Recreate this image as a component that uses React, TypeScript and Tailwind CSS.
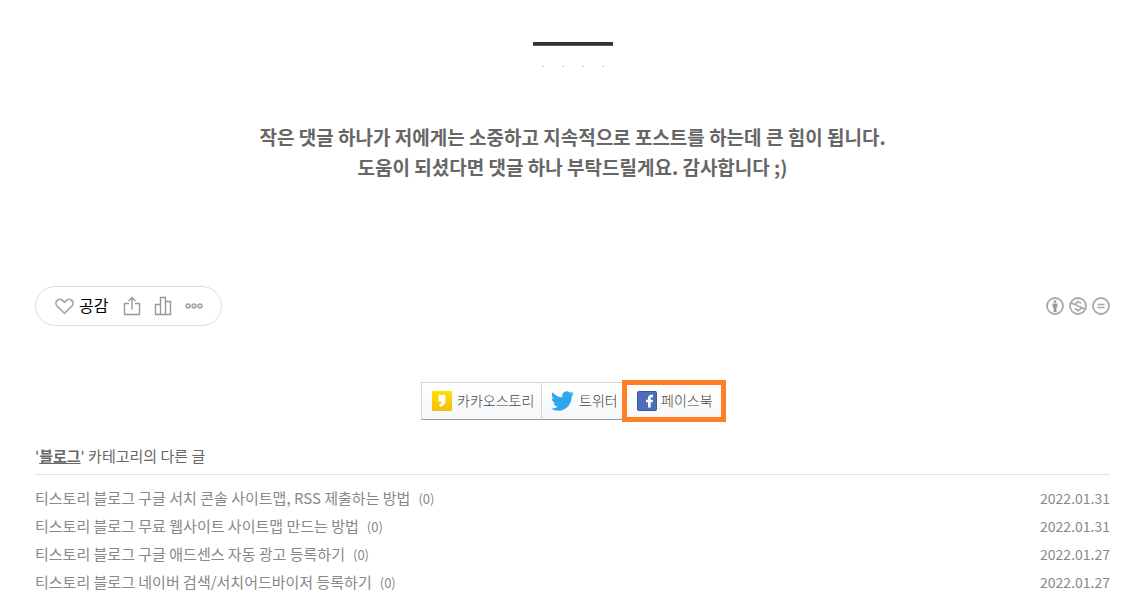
import React from "react";

type Post = { title: string; count: number; date: string };

const posts: Post[] = [
  { title: "티스토리 블로그 구글 서치 콘솔 사이트맵, RSS 제출하는 방법", count: 0, date: "2022.01.31" },
  { title: "티스토리 블로그 무료 웹사이트 사이트맵 만드는 방법", count: 0, date: "2022.01.31" },
  { title: "티스토리 블로그 구글 애드센스 자동 광고 등록하기", count: 0, date: "2022.01.27" },
  { title: "티스토리 블로그 네이버 검색/서치어드바이저 등록하기", count: 0, date: "2022.01.27" },
];

function HeartIcon() {
  return (
    <svg width="19" height="17" viewBox="0 0 19 17" fill="none" stroke="#acacac" strokeWidth="1.8" strokeLinejoin="round" aria-hidden="true">
      <path d="M9.5 15.4 2.2 8.2C.6 6.5.6 4 2.1 2.5c1.6-1.6 4.1-1.6 5.6 0l1.8 1.8 1.8-1.8c1.5-1.6 4-1.6 5.6 0 1.5 1.5 1.5 4-.1 5.7Z" />
    </svg>
  );
}

function ShareIcon() {
  return (
    <svg width="18" height="20" viewBox="0 0 18 20" fill="none" stroke="#999" strokeWidth="1.4" aria-hidden="true">
      <path d="M6 7.5H1.5v11h15v-11H12M9 13.5V1.5M5.5 5 9 1.5 12.5 5" />
    </svg>
  );
}

function StatsIcon() {
  return (
    <svg width="18" height="20" viewBox="0 0 18 20" fill="none" stroke="#999" strokeWidth="1.4" aria-hidden="true">
      <path d="M6.5 18.5h-5v-10h5M6.5 18.5v-17h5v17ZM11.5 5.5h5v13h-5" />
    </svg>
  );
}

function MoreIcon() {
  return (
    <svg width="18" height="6" viewBox="0 0 18 6" fill="none" stroke="#a6a6a6" strokeWidth="1.7" aria-hidden="true">
      <circle cx="3" cy="3" r="1.9" />
      <circle cx="9" cy="3" r="1.9" />
      <circle cx="15" cy="3" r="1.9" />
    </svg>
  );
}

function AttributionIcon() {
  return (
    <svg width="18" height="18" viewBox="0 0 18 18" aria-hidden="true">
      <circle cx="9" cy="9" r="8" fill="none" stroke="#a9a9a9" strokeWidth="1.8" />
      <circle cx="9" cy="4.6" r="1.4" fill="#999" />
      <path d="M6.6 6.5h4.8v4h-1V15H7.6v-4.500h-1Z" fill="#999" />
    </svg>
  );
}

function NonCommercialIcon() {
  return (
    <svg width="18" height="18" viewBox="0 0 18 18" fill="none" stroke="#a9a9a9" aria-hidden="true">
      <circle cx="9" cy="9" r="8" strokeWidth="1.8" />
      <path d="M1.700 5.700 6.600 7.900M11.400 10.100l4.900 2.200" strokeWidth="1.700" />
      <path d="M12 6.600C11.400 5.600 10.300 5.200 9.200 5.200c-1.500 0-2.600.7-2.600 1.800 0 2.400 5.300 1.600 5.300 4.100 0 1.200-1.200 1.900-2.700 1.900-1.500 0-2.600-.5-3.200-1.500M9.200 3.400v2M9.200 12.800v2" strokeWidth="1.600" />
    </svg>
  );
}

function NoDerivativesIcon() {
  return (
    <svg width="18" height="18" viewBox="0 0 18 18" fill="none" stroke="#a9a9a9" aria-hidden="true">
      <circle cx="9" cy="9" r="8" strokeWidth="1.8" />
      <path d="M5.500 7.500h7M5.500 10.500h7" strokeWidth="1.600" />
    </svg>
  );
}

function KakaoStoryIcon() {
  return (
    <svg width="20" height="20" viewBox="0 0 20 20" aria-hidden="true">
      <defs>
        <linearGradient id="story" x1="0" y1="0" x2="0" y2="1">
          <stop offset="0" stopColor="#fde000" />
          <stop offset="1" stopColor="#f3bd0d" />
        </linearGradient>
      </defs>
      <rect width="20" height="20" rx="1.500" fill="url(#story)" />
      <path d="M6.500 4h7v5.500c0 3.500-1.900 5.800-5.300 6.300l-1.300-2c1.700-.6 2.600-1.700 2.700-3.300H6.500Z" fill="#fff" />
    </svg>
  );
}

function TwitterIcon() {
  return (
    <svg width="23" height="20" viewBox="0 2 24 20" preserveAspectRatio="none" fill="#2ca7ee" aria-hidden="true">
      <path d="M23.950 4.570a10 10 0 0 1-2.820.770 4.960 4.960 0 0 0 2.160-2.720 9.900 9.900 0 0 1-3.130 1.180 4.920 4.920 0 0 0-8.380 4.480A13.930 13.930 0 0 1 1.640 3.160a4.920 4.920 0 0 0 1.520 6.570 4.900 4.900 0 0 1-2.230-.620v.060a4.920 4.920 0 0 0 3.950 4.830 5 5 0 0 1-2.210.080 4.940 4.940 0 0 0 4.600 3.420A9.870 9.870 0 0 1 0 19.540a13.990 13.990 0 0 0 7.550 2.210c9.050 0 14-7.500 14-13.980 0-.210 0-.420-.020-.630a9.940 9.940 0 0 0 2.460-2.550Z" />
    </svg>
  );
}

function FacebookIcon() {
  return (
    <svg width="20" height="20" viewBox="0 0 20 20" aria-hidden="true">
      <rect x=".5" y=".5" width="19" height="19" rx="1" fill="#4c6db8" stroke="#3a589c" />
      <path d="M11 16.500v-5.200H9V8.800h2V7.400c0-2.300 1.300-3.600 3.400-3.600.8 0 1.200.1 1.600.2v2.200h-1c-1 0-1.300.5-1.300 1.300v1.300h2.300l-.4 2.500h-1.900v5.200Z" fill="#fff" />
    </svg>
  );
}

export default function App() {
  return (
    <main className="bg-white pt-[42px] pr-8 pl-[35px] font-['Noto_Sans_CJK_KR','Noto_Sans_KR',sans-serif] text-[#666]">
      <div className="flex flex-col items-center">
        <div className="h-1 w-20 border-b border-[#605a5c] bg-[#333]" />
        <div className="mt-5 flex gap-[18px]" aria-hidden="true">
          <span className="h-px w-0.5 bg-[#cfcfcf]" />
          <span className="h-px w-0.5 bg-[#cfcfcf]" />
          <span className="h-px w-0.5 bg-[#cfcfcf]" />
          <span className="h-px w-0.5 bg-[#cfcfcf]" />
        </div>
      </div>

      <p className="mt-[55px] text-center text-[19px] leading-[30px] font-bold text-[#666]">
        작은 댓글 하나가 저에게는 소중하고 지속적으로 포스트를 하는데 큰 힘이 됩니다.
        <br />
        도움이 되셨다면 댓글 하나 부탁드릴게요. 감사합니다 ;)
      </p>

      <div className="mt-[104px] flex items-center justify-between">
        <div className="flex h-10 items-center rounded-full border border-[#dcdcdc] pr-[18px] pl-[19px]">
          <button type="button" className="flex items-center gap-[5px] text-base leading-6 text-black">
            <HeartIcon />
            <span className="pb-0.5">공감</span>
          </button>
          <button type="button" aria-label="공유하기" className="ml-[15px]">
            <ShareIcon />
          </button>
          <button type="button" aria-label="통계" className="ml-[13px]">
            <StatsIcon />
          </button>
          <button type="button" aria-label="더보기" className="ml-[13px]">
            <MoreIcon />
          </button>
        </div>
        <a href="#license" aria-label="저작자표시 비영리 변경금지" className="flex gap-[5px]">
          <AttributionIcon />
          <NonCommercialIcon />
          <NoDerivativesIcon />
        </a>
      </div>

      <div className="mt-[54px] flex items-center justify-center pl-[2px] text-sm font-light text-[#444]">
        <a href="#kakaostory" className="flex h-[38px] w-[121px] items-center gap-[5px] border border-[#d6d6d8] border-b-[#97979b] bg-linear-to-b from-white to-[#f5f6f8] pl-[10px] whitespace-nowrap">
          <KakaoStoryIcon />
          <span className="pb-0.5">카카오스토리</span>
        </a>
        <a href="#twitter" className="flex h-[38px] w-20 items-center gap-[5px] border-y border-[#d6d6d8] border-b-[#97979b] bg-linear-to-b from-white to-[#f5f6f8] pl-[9px] whitespace-nowrap">
          <TwitterIcon />
          <span className="pb-0.5">트위터</span>
        </a>
        <a href="#facebook" className="flex h-[42px] w-[104px] items-center gap-1 border-5 border-[#ff7f27] bg-linear-to-b from-white to-[#f8f9fa] pl-[10px] whitespace-nowrap">
          <FacebookIcon />
          <span className="pb-0.5">페이스북</span>
        </a>
      </div>

      <section>
        <h2 className="mt-[21px] border-b border-[#e3e3e3] pb-[5px] text-[15px] leading-[26px] text-[#666]">
          '<a href="#blog" className="font-bold underline">블로그</a>' 카테고리의 다른 글
        </h2>
        <table className="mt-[9px] w-full">
          <tbody>
            {posts.map((post) => (
              <tr key={post.title} className="text-[#888]">
                <th scope="row" className="p-0 text-left text-[15px] leading-7 font-normal">
                  <a href="#post">
                    {post.title}
                    <span className="ml-2 text-[13px] leading-none">({post.count})</span>
                  </a>
                </th>
                <td className="p-0 text-right align-top text-sm leading-7">{post.date}</td>
              </tr>
            ))}
          </tbody>
        </table>
      </section>
    </main>
  );
}
